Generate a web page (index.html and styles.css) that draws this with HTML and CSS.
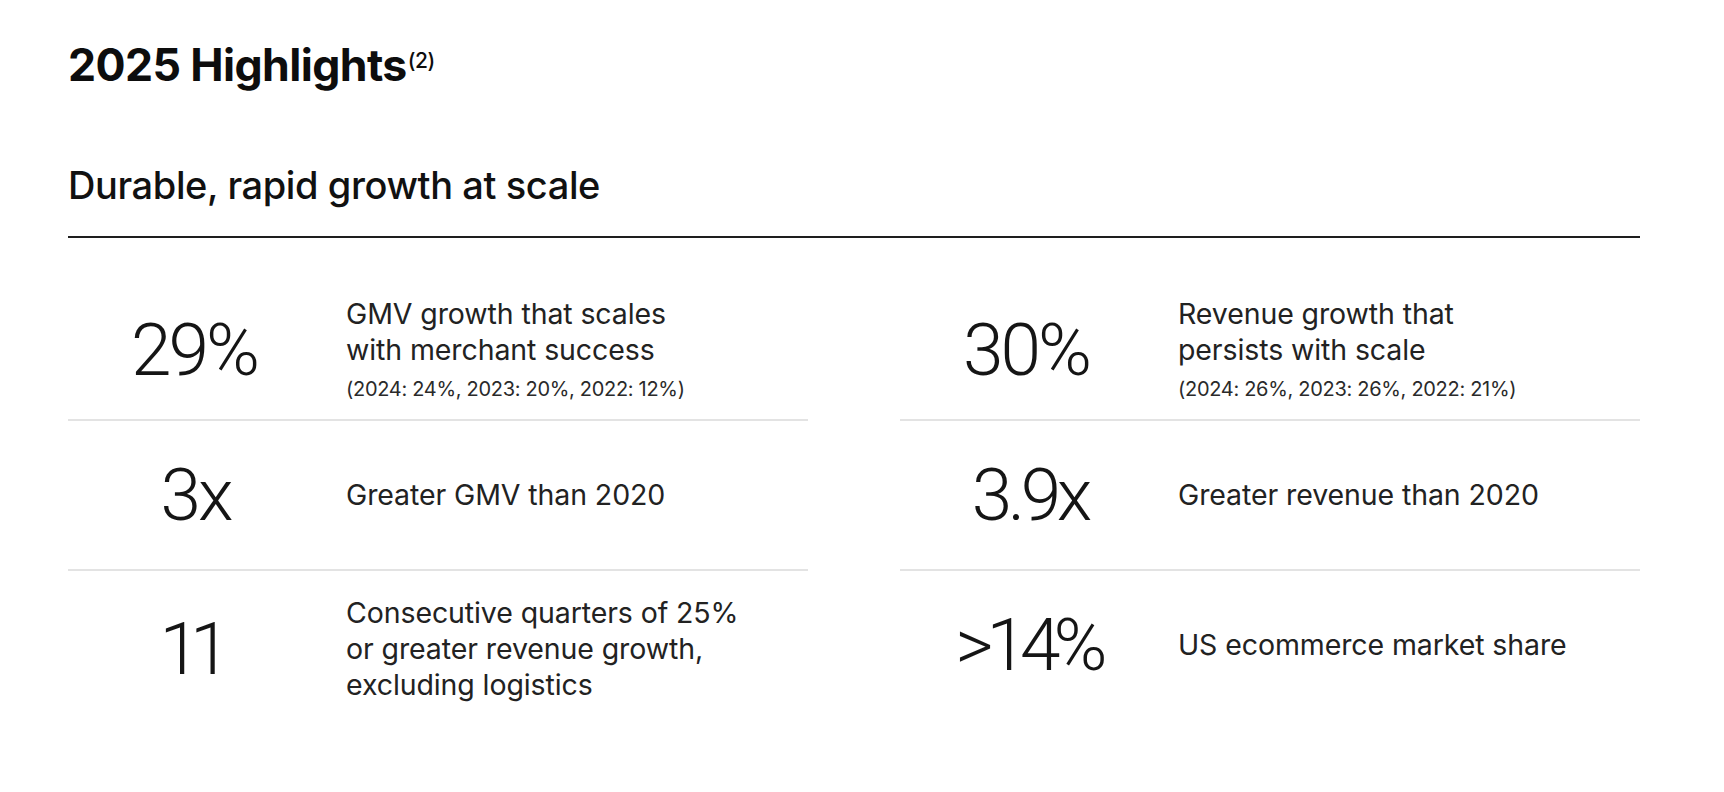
FILE: index.html
```html
<!DOCTYPE html>
<html lang="en">
<head>
<meta charset="utf-8">
<title>2025 Highlights</title>
<link rel="stylesheet" href="styles.css">
</head>
<body>
<main class="page">
  <header class="head">
    <h1 class="title">2025 Highlights<sup class="note">(2)</sup></h1>
    <h2 class="subtitle">Durable, rapid growth at scale</h2>
  </header>
  <section class="grid">
    <div class="col">
      <div class="row">
        <div class="num">29%</div>
        <div class="desc">
          <p class="line">GMV growth that scales<br>with merchant success</p>
          <p class="small">(2024: 24%, 2023: 20%, 2022: 12%)</p>
        </div>
      </div>
      <div class="row">
        <div class="num num-mult">3<span class="x">x</span></div>
        <div class="desc"><p class="line">Greater GMV than 2020</p></div>
      </div>
      <div class="row">
        <div class="num num-ones">11</div>
        <div class="desc"><p class="line">Consecutive quarters of 25%<br>or greater revenue growth,<br>excluding logistics</p></div>
      </div>
    </div>
    <div class="col">
      <div class="row">
        <div class="num">30%</div>
        <div class="desc">
          <p class="line">Revenue growth that<br>persists with scale</p>
          <p class="small">(2024: 26%, 2023: 26%, 2022: 21%)</p>
        </div>
      </div>
      <div class="row">
        <div class="num num-tight">3.9<span class="x">x</span></div>
        <div class="desc"><p class="line">Greater revenue than 2020</p></div>
      </div>
      <div class="row">
        <div class="num num-share">&gt;14%</div>
        <div class="desc"><p class="line">US ecommerce market share</p></div>
      </div>
    </div>
  </section>
</main>
</body>
</html>
```

FILE: styles.css
```css
* { box-sizing: border-box; }
html, body {
  margin: 0;
  padding: 0;
  background: #ffffff;
}
body {
  font-family: Inter, "Noto Sans", "Liberation Sans", sans-serif;
  color: #1c1c1c;
}
.page {
  width: 1572px;
  margin-left: 68px;
  padding-top: 39px;
}
.head {
  border-bottom: 2px solid #1e1e1e;
  padding-bottom: 29px;
}
.title {
  margin: 0;
  font-size: 44.6px;
  line-height: 53px;
  font-weight: 700;
  letter-spacing: -0.6px;
  color: #0d0d0d;
}
.note {
  font-size: 21px;
  font-weight: 500;
  vertical-align: top;
  position: relative;
  top: -5px;
  letter-spacing: -0.5px;
  margin-left: 1px;
}
.subtitle {
  margin: 71px 0 0;
  font-size: 38px;
  line-height: 44px;
  font-weight: 500;
  letter-spacing: -0.4px;
  color: #111;
}
.grid {
  display: grid;
  grid-template-columns: 740px 740px;
  column-gap: 92px;
  margin-top: 34px;
}
.col {
  display: flex;
  flex-direction: column;
}
.row {
  display: grid;
  grid-template-columns: 252px 1fr;
  column-gap: 26px;
  align-items: center;
  padding: 24px 0;
}
.row:first-child {
  padding-bottom: 16px;
}
.row + .row {
  border-top: 2px solid #e3e3e3;
}
.num {
  text-align: center;
  font-family: Roboto, "Liberation Sans", sans-serif;
  font-weight: 300;
  font-size: 73px;
  line-height: 100px;
  letter-spacing: -3px;
  color: #151515;
}
.num-mult { text-indent: 6px; }
.num-tight { letter-spacing: -4.5px; text-indent: 12px; }
.num-ones { letter-spacing: -10px; text-indent: -8px; }
.num-share { letter-spacing: -7px; text-indent: 4px; }
.x {
  letter-spacing: 0;
}
.desc p { margin: 0; }
.line {
  font-size: 28.5px;
  line-height: 36px;
  color: #222;
  letter-spacing: -0.1px;
}
.small {
  margin-top: 7px !important;
  font-size: 20px;
  line-height: 28px;
  color: #2a2a2a;
  letter-spacing: -0.3px;
}
```
